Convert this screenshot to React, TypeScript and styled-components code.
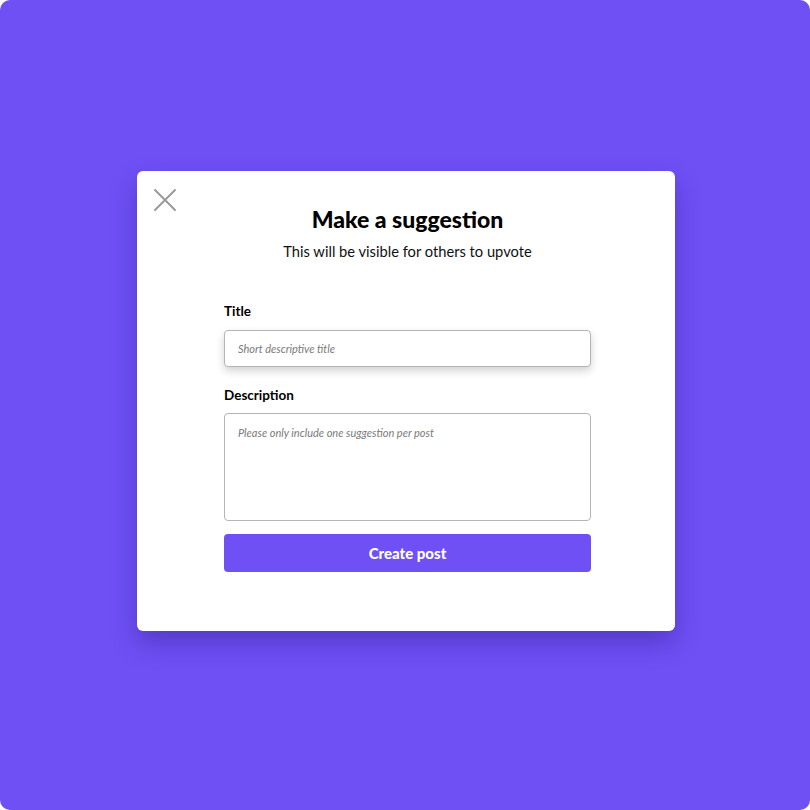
import styled, { createGlobalStyle } from 'styled-components';

const GlobalStyle = createGlobalStyle`
  html, body {
    margin: 0;
    padding: 0;
    background: #ffffff;
  }
  * {
    box-sizing: border-box;
  }
`;

// Purple backdrop filling the whole window
const Backdrop = styled.div`
  width: 810px;
  height: 810px;
  background-color: #6e50f5;
  border-radius: 10px;
  padding: 0 0 8px 2px;
  display: flex;
  align-items: center;
  justify-content: center;
  font-family: "Lato", "Open Sans", sans-serif;
`;

const Modal = styled.div`
  position: relative;
  width: 538px;
  height: 460px;
  background-color: #ffffff;
  border-radius: 6px;
  box-shadow: 0 12px 24px rgba(40, 20, 120, 0.35);
  padding: 34px 84px 0 87px;
  display: flex;
  flex-direction: column;
  align-items: stretch;
`;

const CloseButton = styled.button`
  position: absolute;
  top: 15px;
  left: 14px;
  width: 27px;
  height: 27px;
  padding: 0;
  border: none;
  background: none;
  cursor: pointer;
  display: flex;
  align-items: center;
  justify-content: center;
`;

const Heading = styled.h1`
  margin: 0;
  text-align: center;
  font-size: 23px;
  font-weight: 900;
  color: #000000;
  line-height: 28px;
`;

const Subheading = styled.p`
  margin: 8px 0 0;
  text-align: center;
  font-size: 14.7px;
  color: #111111;
  line-height: 20px;
`;

const Form = styled.form`
  margin-top: 41px;
  display: flex;
  flex-direction: column;
`;

const Label = styled.label<{ $gap?: number }>`
  display: block;
  font-size: 13.5px;
  font-weight: 700;
  color: #000000;
  line-height: 18px;
  margin-top: ${(p) => p.$gap ?? 0}px;
  margin-bottom: ${(p) => (p.$gap ? 9 : 10)}px;
`;

const TextInput = styled.input`
  width: 100%;
  height: 37px;
  border: 1px solid #b4b4b4;
  border-radius: 4px;
  padding: 0 13px;
  font-family: inherit;
  font-size: 11px;
  box-shadow: 0 4px 8px rgba(0, 0, 0, 0.18);
  outline: none;

  &::placeholder {
    color: #7a7a7a;
    font-style: italic;
  }
`;

const TextArea = styled.textarea`
  width: 100%;
  height: 108px;
  border: 1px solid #b4b4b4;
  border-radius: 4px;
  padding: 12px 13px;
  font-family: inherit;
  font-size: 11px;
  resize: none;
  outline: none;

  &::placeholder {
    color: #7a7a7a;
    font-style: italic;
  }
`;

const SubmitButton = styled.button`
  margin-top: 13px;
  height: 38px;
  width: 100%;
  border: none;
  border-radius: 4px;
  background-color: #6e50f5;
  color: #ffffff;
  font-family: inherit;
  font-size: 15px;
  font-weight: 900;
  cursor: pointer;
`;

export default function App() {
  return (
    <>
      <GlobalStyle />
      <Backdrop>
        <Modal>
          <CloseButton type="button" aria-label="Close">
            <svg width="24" height="24" viewBox="0 0 24 24">
              <path d="M2 2 L22 22 M22 2 L2 22" stroke="#9a9a9a" strokeWidth="2" strokeLinecap="round" />
            </svg>
          </CloseButton>
          <Heading>Make a suggestion</Heading>
          <Subheading>This will be visible for others to upvote</Subheading>
          <Form onSubmit={(e) => e.preventDefault()}>
            <Label htmlFor="title">Title</Label>
            <TextInput id="title" placeholder="Short descriptive title" />
            <Label htmlFor="desc" $gap={19}>Description</Label>
            <TextArea id="desc" placeholder="Please only include one suggestion per post" />
            <SubmitButton type="submit">Create post</SubmitButton>
          </Form>
        </Modal>
      </Backdrop>
    </>
  );
}
